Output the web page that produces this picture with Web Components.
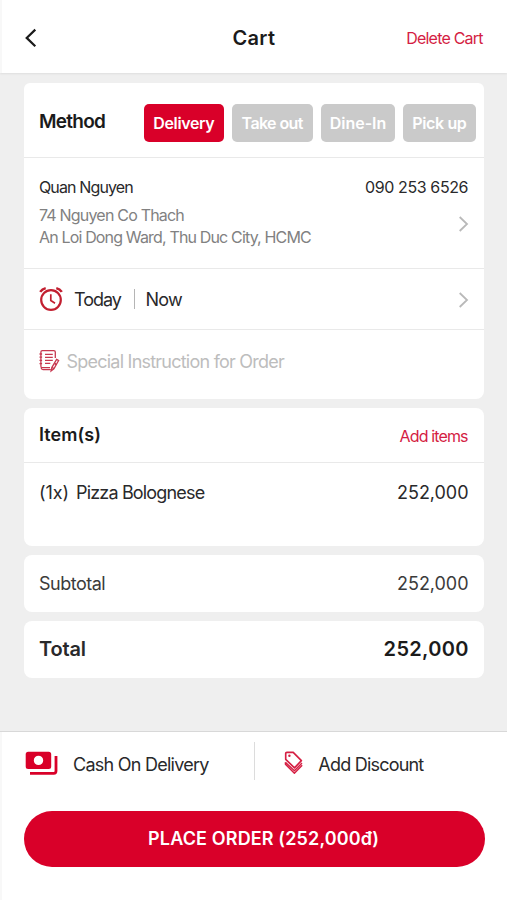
<!DOCTYPE html>
<html lang="en"><head><meta charset="utf-8"><title>Cart</title>
<style>
html,body{margin:0;height:100%}
body{font-family:Inter,"Liberation Sans",sans-serif;color:#29292b;overflow:hidden}
</style></head><body>
<cart-screen></cart-screen>
<script>
const define=(name,html,setup)=>{
  const t=document.createElement('template');t.innerHTML=html;
  customElements.define(name,class extends HTMLElement{
    constructor(){super();this.attachShadow({mode:'open'}).append(t.content.cloneNode(true));}
    connectedCallback(){if(setup)setup(this,this.shadowRoot);}
  });
};

/* A single line of text with its size, tracking and line height */
define('ui-text',`<style>
:host{display:block;white-space:pre;font-size:var(--s,16px);letter-spacing:var(--t,0);margin-right:calc(var(--t,0px)*-1);line-height:var(--h,22px)}
:host([bold]){font-weight:600}
</style><slot></slot>`);

define('ui-card',`<style>
:host{display:flex;flex-direction:column;box-sizing:border-box;background:#fff;border-radius:8px;overflow:hidden}
</style><slot></slot>`);

define('card-row',`<style>
:host{display:flex;box-sizing:border-box;align-items:center;justify-content:space-between;padding:0 15.5px 0 15px}
:host([line]){border-bottom:1.5px solid #e9e9e9}
</style><slot></slot>`);

define('method-chip',`<style>
:host{display:flex;box-sizing:border-box;height:38px;align-items:center;justify-content:center;background:#cacaca;color:#fff;border-radius:5px;font-weight:600}
:host([active]){background:#d90029}
</style><slot></slot>`);

const icons={
back:[14,22,'<path d="M11.3 2.6 2.7 10.9l8.6 8.4" fill="none" stroke="#1b1b1b" stroke-width="2.2"/>'],
next:[12,18,'<path d="M2.7 2 10 9l-7.3 7" fill="none" stroke="#b9b9b9" stroke-width="1.8"/>'],
alarm:[24,26,'<g fill="none" stroke="#c21f30"><circle cx="12" cy="14" r="9.8" stroke-width="2.2"/><path d="M11.8 8.2v6.3l4.2 2.7" stroke-width="1.7"/><path d="M1.2 5.9Q3.2 3 6.7 2.1M22.8 5.9Q20.8 3 17.3 2.1" stroke-width="2.5"/></g>'],
note:[21,24,'<g fill="none" stroke="#c73850" stroke-width="1.3"><path d="M16.3 9V3q0-1.4-1.5-1.4H3.3q-1.4 0-1.4 1.4v14.2q0 1.5 1.5 1.5H11"/><path d="M16.3 14v2.3M.5 5h2.6M.5 8.2h2.6M.5 11.4h2.6M.5 14.6h2.6M6 5.3h7.8M6 8.3h7.8M6 11.3h7.8M6 14.3h5.3M2 18.7q.5 2 2 2h7.8"/><path d="m17.6 10.4 2 1.1-4.7 8.3-2.8 2.2.7-3.4zM13 18.4l2 1.3"/></g>'],
cash:[34,26,'<path fill="#d90029" fill-rule="evenodd" d="M3.2.8h20.5q2.5 0 2.5 2.5v12.3q0 2.5-2.5 2.5H3.2q-2.5 0-2.5-2.5V3.3Q.7.8 3.2.8ZM13.5 4.7a4.7 4.7 0 1 0 0 9.4 4.7 4.7 0 0 0 0-9.4Z"/><path d="M31 5v15q0 2.3-2.2 2.3H5" fill="none" stroke="#d90029" stroke-width="2.8"/>'],
tag:[20,24,'<g fill="none" stroke="#d51e42" stroke-width="1.65" stroke-linejoin="round"><path d="M3 1.3h6.2l8.2 8.3-6.9 7.3L1.7 8.3V2.6Q1.7 1.3 3 1.3Z"/><path d="M1.4 11.3v1.9l9 9 7.8-8M1.4 11.3l9 8.5 7.6-7.8" stroke-width="1.4"/></g><circle cx="5.4" cy="4.8" r="1.2" fill="#d51e42"/>']
};
define('ui-icon','<style>:host{display:block;flex:none}svg{display:block}</style>',(el,root)=>{
  if(root.querySelector('svg'))return;
  const [w,h,body]=icons[el.getAttribute('name')];
  root.append(document.createRange().createContextualFragment(`<svg xmlns="http://www.w3.org/2000/svg" width="${w}" height="${h}" viewBox="0 0 ${w} ${h}">${body}</svg>`));
});

define('cart-header',`<style>
:host{display:grid;grid-template-columns:1fr auto 1fr;align-items:center;box-sizing:border-box;height:73px;padding:3px 23.5px 0 24px;background:#fff;color:#1b1b1b;box-shadow:0 1px 2px #00000012}
.del{justify-self:end;color:#d41d43}
</style><ui-icon name="back"></ui-icon>
<ui-text bold style="--s:20px;--t:.3px">Cart</ui-text>
<ui-text class="del" style="--t:-.79px">Delete Cart</ui-text>`);

define('cart-footer',`<style>
:host{display:block;box-sizing:border-box;height:169px;background:#fff;border-top:1.5px solid #d8d8d8;padding:10px 22.5px 0 23.5px}
.opts{display:flex;align-items:center;height:38px}
.opts ui-text{padding-top:7px}
.sep{width:1px;height:38px;background:#dcdcdc;margin:0 29px 0 45px}
button{all:unset;display:flex;align-items:center;justify-content:center;box-sizing:border-box;width:100%;height:56px;margin-top:31px;padding-left:19px;border-radius:28px;background:#d90029;color:#fff}
</style><div class="opts"><ui-icon name="cash" style="margin:5px 14px 0 1.5px"></ui-icon>
<ui-text style="--s:18px;--t:-.75px">Cash On Delivery</ui-text><div class="sep"></div>
<ui-icon name="tag" style="margin:4px 14px 0 0"></ui-icon><ui-text style="--s:18px;--t:-.79px">Add Discount</ui-text></div>
<button><ui-text bold style="--s:18px;--t:.14px">PLACE ORDER (252,000đ)</ui-text></button>`);

define('cart-screen',`<style>
:host{display:flex;flex-direction:column;box-sizing:border-box;width:507px;height:900px;background:#efefef}
main{flex:1;display:flex;flex-direction:column;gap:9px;padding:10px 23px 0 24px}
cart-header,cart-footer{background:linear-gradient(90deg,#f8f8f8 2px,#fff 2px)}
.chips{display:flex;gap:8px;margin-right:-7.5px}
.who{display:grid;grid-template-columns:1fr auto;align-content:start}
.grey{color:#818181}
.when{display:flex;align-items:center}
.when ui-text{padding-top:2px}
.bar{width:1.5px;height:20px;background:#b5b5b5;margin:0 10.5px 0 11.5px}
.red{color:#d41d43}
</style>
<cart-header></cart-header>
<main>
<ui-card style="height:316px;border-radius:6px 6px 8px 8px">
 <card-row line style="height:75px;padding-top:6px">
  <ui-text bold style="--s:19px;--t:-.72px;--h:36px;margin-top:-2px;color:#1b1b1b">Method</ui-text>
  <div class="chips">
   <method-chip active style="width:80px"><ui-text bold style="--t:-.36px">Delivery</ui-text></method-chip>
   <method-chip style="width:81px"><ui-text bold style="--t:-.6px">Take out</ui-text></method-chip>
   <method-chip style="width:74px"><ui-text bold>Dine-In</ui-text></method-chip>
   <method-chip style="width:73px"><ui-text bold style="--t:-.35px">Pick up</ui-text></method-chip>
  </div>
 </card-row>
 <card-row line class="who" style="height:111px;display:grid;padding-top:18px">
  <ui-text style="--t:-.87px">Quan Nguyen</ui-text><ui-text style="--t:-.39px">090 253 6526</ui-text>
  <div class="grey" style="padding-top:6px"><ui-text style="--t:-.8px">74 Nguyen Co Thach</ui-text><ui-text style="--t:-.84px">An Loi Dong Ward, Thu Duc City, HCMC</ui-text></div>
  <ui-icon name="next" style="justify-self:end;margin:1px 0 0"></ui-icon>
 </card-row>
 <card-row line style="height:61px">
  <div class="when"><ui-icon name="alarm" style="margin-right:11px"></ui-icon><ui-text style="--s:18px;--t:-1px">Today</ui-text><div class="bar"></div><ui-text style="--s:18px;--t:-.8px">Now</ui-text></div>
  <ui-icon name="next" style="margin-top:2px"></ui-icon>
 </card-row>
 <card-row style="height:62px;justify-content:flex-start"><ui-icon name="note" style="margin-right:6.5px"></ui-icon><ui-text style="--s:18px;--t:-.77px;color:#bdbdbd;padding-top:2px">Special Instruction for Order</ui-text></card-row>
</ui-card>
<ui-card style="height:138px">
 <card-row line style="height:55px"><ui-text bold style="--s:18px;--t:.05px;color:#1b1b1b">Item(s)</ui-text><ui-text class="red" style="--t:-.87px;margin-top:1px">Add items</ui-text></card-row>
 <card-row style="height:59px"><div style="display:flex;gap:7px"><ui-text style="--s:18px;--t:-.1px">(1x)</ui-text><ui-text style="--s:18px;--t:-.83px">Pizza Bolognese</ui-text></div><ui-text style="--s:18px;--t:-.05px">252,000</ui-text></card-row>
</ui-card>
<ui-card style="height:57px"><card-row style="height:57px;padding-top:1px"><ui-text style="--s:18px;--t:-.5px;color:#3b3b3b">Subtotal</ui-text><ui-text style="--s:18px;--t:-.05px;color:#3b3b3b">252,000</ui-text></card-row></ui-card>
<ui-card style="height:57px"><card-row style="height:56px"><ui-text bold style="--s:20px;--t:-.15px">Total</ui-text><ui-text bold style="--s:20px;--t:.33px;color:#1b1b1b">252,000</ui-text></card-row></ui-card>
</main>
<cart-footer></cart-footer>`);
</script></body></html>
